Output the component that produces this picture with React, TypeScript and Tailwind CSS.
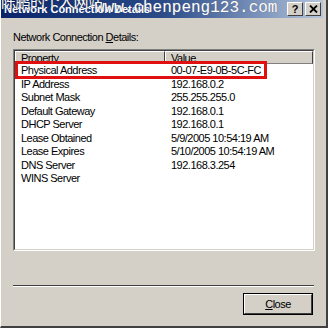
import React from 'react'

const rows = [
  ['Physical Address', '00-07-E9-0B-5C-FC'],
  ['IP Address', '192.168.0.2'],
  ['Subnet Mask', '255.255.255.0'],
  ['Default Gateway', '192.168.0.1'],
  ['DHCP Server', '192.168.0.1'],
  ['Lease Obtained', '5/9/2005 10:54:19 AM'],
  ['Lease Expires', '5/10/2005 10:54:19 AM'],
  ['DNS Server', '192.168.3.254'],
  ['WINS Server', ''],
]

const CaptionButton = ({ children }: { children: React.ReactNode }) => (
  <div className="w-[16px] h-[14px] bg-[#d4d0c8] border border-t-white border-l-white border-r-[#404040] border-b-[#404040] flex items-center justify-center text-[11px] font-bold leading-none text-black tracking-normal">
    {children}
  </div>
)

export default function App() {
  return (
    <div className="w-[330px] h-[330px] bg-white overflow-hidden font-['Liberation_Sans',Arial,sans-serif] text-[11px] tracking-[-0.5px] text-black">
      <div className="relative w-[328px] h-[328px] bg-[#d4d0c8] border-r-2 border-b-2 border-r-[#404040] border-b-[#404040] border-l border-l-white">
        {/* title bar */}
        <div className="h-[18px] mr-[3px] bg-gradient-to-r from-[#0a246a] via-[#2a4a88] to-[#b6c6dc] flex items-center justify-between pl-[3px] pr-[2px]">
          <span className="text-white font-bold text-[11px] leading-none tracking-normal">Network Connection Details</span>
          <div className="flex items-center gap-[2px]">
            <CaptionButton>?</CaptionButton>
            <CaptionButton>
              <svg width="9" height="8" viewBox="0 0 9 8">
                <path d="M1 0.5 L8 7.5 M8 0.5 L1 7.5" stroke="black" strokeWidth="1.8" />
              </svg>
            </CaptionButton>
          </div>
        </div>

        {/* watermark */}
        <div className="absolute left-0 top-[-7px] text-white text-[15px] leading-none tracking-[-0.5px] font-['Noto_Sans_CJK_SC',sans-serif] [text-shadow:0_0_1px_#333]">
          陈鹏的个人网站
        </div>
        <div className="absolute left-[94px] top-[0px] text-white text-[16px] leading-none tracking-normal font-['Liberation_Mono',monospace] [text-shadow:0_0_1px_#667]">
          www.chenpeng123.com
        </div>

        {/* body */}
        <div className="pl-[12px] pr-[12px] pt-[13px]">
          <div className="leading-[13px] h-[13px]">
            Network Connection <span className="underline">D</span>etails:
          </div>
          <div className="relative mt-[5px] w-[302px] h-[202px] border border-t-[#808080] border-l-[#808080] border-r-white border-b-white">
            <div className="w-full h-full border border-t-[#404040] border-l-[#404040] border-r-[#d4d0c8] border-b-[#d4d0c8] bg-white">
              <div className="flex h-[13px] leading-[12px]">
                <div className="w-[150px] bg-[#d4d0c8] border border-t-white border-l-white border-r-[#404040] border-b-[#808080] pl-[5px]">
                  Property
                </div>
                <div className="flex-1 bg-[#d4d0c8] border border-t-white border-l-white border-r-[#404040] border-b-[#808080] pl-[5px]">
                  Value
                </div>
              </div>
              {rows.map(([k, v]) => (
                <div key={k} className="flex h-[13.5px] leading-[13.5px]">
                  <div className="w-[150px] pl-[6px]">{k}</div>
                  <div className="flex-1 pl-[6px]">{v}</div>
                </div>
              ))}
            </div>
            {/* red highlight */}
            <div className="absolute left-[1px] top-[11px] w-[252px] h-[18px] border-[3px] border-[#e01010]" />
          </div>

          {/* separator */}
          <div className="mt-[34px] w-[301px] border-t border-t-[#404040] border-b border-b-white" />

          <div className="flex justify-end mt-[6px] pr-[1px]">
            <div className="w-[70px] h-[22px] border border-black">
              <div className="w-full h-full border border-t-white border-l-white border-r-[#404040] border-b-[#404040] flex items-center justify-center">
                <span>
                  <span className="underline">C</span>lose
                </span>
              </div>
            </div>
          </div>
        </div>
      </div>
    </div>
  )
}
